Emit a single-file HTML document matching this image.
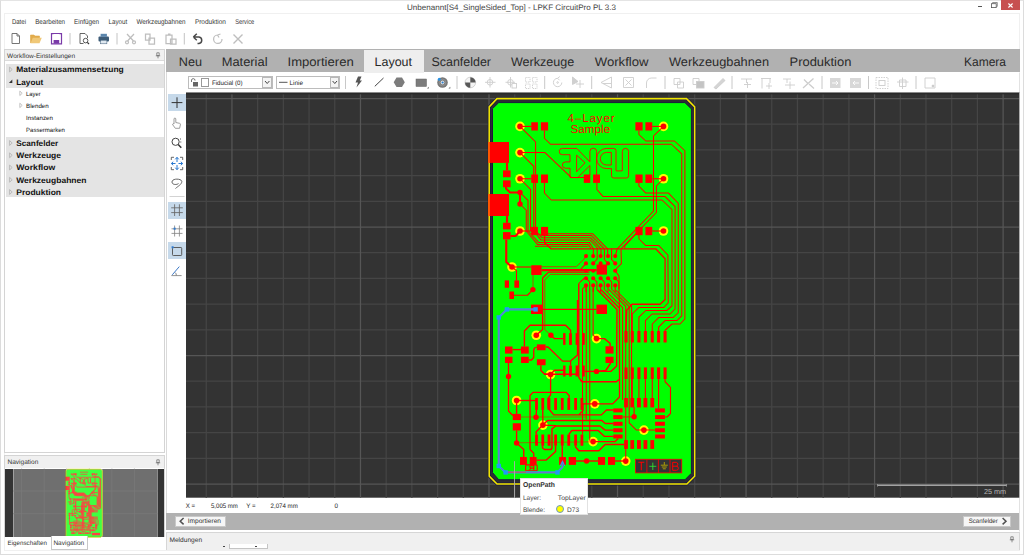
<!DOCTYPE html>
<html><head><meta charset="utf-8">
<style>
*{margin:0;padding:0;box-sizing:border-box}
html,body{width:1024px;height:555px;overflow:hidden;background:#fff;font-family:"Liberation Sans",sans-serif;color:#222;text-rendering:geometricPrecision}
.a{position:absolute}
.t{position:absolute;white-space:nowrap;line-height:1}
#menu .t{font-size:6.9px;top:19.2px;color:#333;transform-origin:0 0}
#tabs .t{font-size:12.75px;top:55.66px;color:#2a2a2a}
.tree-b{font-weight:bold;font-size:8.4px;color:#111;left:16px}
.tree-s{font-size:6.3px;color:#222}
.hdr{background:#f0f0f0}
</style></head><body>
<!-- window frame -->
<div class="a" style="left:0;top:0;width:1024px;height:555px;border:1px solid #dcdcdc;border-top-color:#e4e4e4"></div>
<div class="a" style="left:4px;top:13px;width:1016px;height:538px;border:1px solid #f0f0f0"></div>
<!-- title -->
<!-- window buttons -->
<div class="a" style="left:977.6px;top:6.2px;width:4.4px;height:0.9px;background:#555"></div>
<svg class="a" style="left:988px;top:0" width="12" height="10" viewBox="988 0 12 10" fill="none"><path d="M992.6 3.6 V2.5 H997.3 V6.4 H996.3" stroke="#666" stroke-width="0.7"/><rect x="991.6" y="3.7" width="4.6" height="3.9" stroke="#555" stroke-width="0.8" fill="#fff"/></svg>
<div class="a" style="left:1001px;top:0;width:19px;height:9.8px;background:#c75050"></div>
<svg class="a" style="left:1001px;top:0" width="19" height="10" viewBox="0 0 19 10"><path d="M7.4 3.5 L11.6 7.5 M11.6 3.5 L7.4 7.5" stroke="#fff" stroke-width="1.1"/></svg>
<!-- menu -->
<div id="menu">
</div>
<!-- toolbar1 -->
<svg id="tb1" class="a" style="left:0;top:30px" width="260" height="18" viewBox="0 30 260 18" fill="none">
<path d="M12 33.5 H17 L19.5 36 V43.5 H12 Z M17 33.5 V36 H19.5" stroke="#666" stroke-width="0.9"/>
<path d="M30.5 43 V35 H34 L35 36 H39.5 V38" fill="#e2ac4c" stroke="#e0aa48" stroke-width="0.6"/><path d="M30.5 43.2 L32.8 37.8 H41.8 L39.5 43.2 Z" fill="#f0c878"/>
<path d="M51.5 33.7 H61.5 V43.8 H51.5 Z" stroke="#7a3aa8" stroke-width="1.2"/><rect x="53.6" y="40" width="5.6" height="3.6" fill="#7a3aa8"/><rect x="53.5" y="34" width="6" height="3" fill="#fff"/>
<path d="M70 33 V44.5 M117 33 V44.5 M184.3 33 V44.5" stroke="#c4c4c4" stroke-width="1"/>
<path d="M80 33.5 H85 L87.5 36 V38 M80 33.5 V43.5 H83.5" stroke="#555" stroke-width="0.9"/><circle cx="85.6" cy="40.6" r="2.3" stroke="#444" stroke-width="0.9"/><path d="M87.3 42.3 L89 44" stroke="#333" stroke-width="1.2"/>
<rect x="98.5" y="36.5" width="10.5" height="5" rx="1" fill="#3d5c78"/><rect x="100.6" y="33.8" width="6.3" height="3" fill="#5b86ad"/><rect x="100.6" y="40.2" width="6.3" height="3.6" fill="#dfe8f0" stroke="#3d5c78" stroke-width="0.5"/>
<g stroke="#bebebe" stroke-width="1.25">
<path d="M127 34 L133.5 41 M134 34 L127.5 41"/><circle cx="127" cy="42.3" r="1.5"/><circle cx="134" cy="42.3" r="1.5"/>
<path d="M145.5 34 H150 V40 H145.5 Z M149 38 H154.5 V44 H149 Z"/>
<path d="M166 35 H172 V43.5 H166 Z M170.5 39 H176 V44 H170.5 Z M168 34 H170.5"/>
<path d="M222 39 A4.2 4.2 0 1 1 217.5 35 M217.5 35 L220.5 34 M217.5 35 L219 37.5"/>
<path d="M233.5 34.5 L242.5 43.5 M242.5 34.5 L233.5 43.5" stroke-width="1.4"/>
</g>
<path d="M193.5 37 H199 A3.3 3.3 0 0 1 199 43.5 H197.5 M193.3 37 L196.8 33.8 M193.3 37 L196.8 40.2" stroke="#484848" stroke-width="1.5"/>
</svg>
<!-- left panel -->
<div class="a" style="left:4px;top:49px;width:161px;height:403.7px;border:1px solid #d4d4d4;background:#fff"></div>
<div class="a hdr" style="left:5px;top:50px;width:159px;height:11px;border-bottom:1px solid #dadada"></div>
<div id="tree">
<div class="a" style="left:6px;top:63.5px;width:158px;height:24.5px;background:#e4e4e4"></div>
<div class="a" style="left:6px;top:137.3px;width:158px;height:60px;background:#e4e4e4"></div>
<svg class="a" style="left:0;top:60px" width="30" height="140" viewBox="0 60 30 140" fill="none" stroke="#a0a0a0" stroke-width="0.6">
<path d="M9.6 67.1 L12.2 69.5 L9.6 71.9 Z"/>
<path d="M9.6 140.6 L12.2 143 L9.6 145.4 Z"/>
<path d="M9.6 152.9 L12.2 155.3 L9.6 157.70000000000002 Z"/>
<path d="M9.6 165.1 L12.2 167.5 L9.6 169.9 Z"/>
<path d="M9.6 177.4 L12.2 179.8 L9.6 182.20000000000002 Z"/>
<path d="M9.6 189.6 L12.2 192 L9.6 194.4 Z"/>
<path d="M12.3 79.6 V83 H8.9 Z" fill="#333" stroke="none"/>
<path d="M19.8 91.1 L22.2 93.3 L19.8 95.5 Z"/>
<path d="M19.8 103.2 L22.2 105.4 L19.8 107.60000000000001 Z"/>
</svg>
</div>
<!-- nav panel -->
<div class="a" style="left:4px;top:455px;width:161px;height:82px;border:1px solid #d4d4d4;background:#fff"></div>
<div class="a hdr" style="left:5px;top:456px;width:159px;height:12px"></div>
<div id="nav">
<div class="a" style="left:4.7px;top:468.6px;width:159px;height:68.1px;background:#343434"></div>
<div class="a" style="left:12.8px;top:468.6px;width:145.2px;height:68.1px;background:#6f6f6f;border-left:1.2px solid #a0a0a0;border-right:1px solid #8c8c8c"></div>
<svg class="a" style="left:4px;top:468px" width="161" height="70" viewBox="4 468 161 70">
<path d="M21.6 468.6 V536.7 M44.2 468.6 V536.7 M66.7 468.6 V536.7 M89.3 468.6 V536.7 M111.9 468.6 V536.7 M134.4 468.6 V536.7 M13 491 H157.5 M13 513.7 H157.5" stroke="#7b7b7b" stroke-width="0.7" fill="none"/>
<rect x="66.2" y="469.4" width="36.2" height="67.2" fill="#fff"/>
<g opacity="0.74" transform="translate(-20.31,451.81) scale(0.1765)">
<polygon points="497,98.5 686.4,98.5 694.75,107 694.75,476.2 687,484.1 497,484.1 489,476 489,107" fill="#00ff00" stroke="#d8c800" stroke-width="5"/>
<g fill="none" stroke="#ff0000" stroke-width="4.3" stroke-linejoin="round">
<path d="M520.00 126.40 L531.25 126.40"/>
<path d="M520.00 126.40 L535.60 142.00 L535.60 230.50 L542.00 237.80 L590.70 237.80 L601.00 248.80 L601.00 256.00"/>
<path d="M544.40 130.50 L544.40 138.25 L550.60 144.25 L671.40 144.25 L681.75 153.90 L681.75 315.90 L677.00 320.60 L665.10 320.60 L658.60 327.10 L658.60 331.00"/>
<path d="M520.00 152.60 L545.00 152.60 L571.40 177.60 L584.00 177.60"/>
<path d="M520.00 152.60 L533.75 166.35 L533.75 230.50 L541.00 240.10 L590.00 240.10 L597.20 247.50 L597.20 259.00"/>
<path d="M507.00 163.00 L507.00 170.40"/>
<path d="M506.00 187.00 L506.00 188.50 L510.00 192.50 L520.00 192.50 L520.00 204.00"/>
<path d="M520.00 192.50 L528.00 200.40 L528.00 231.00 L538.50 242.40 L589.20 242.40 L593.40 248.80 L593.20 256.00"/>
<path d="M520.00 204.00 L526.25 210.25 L526.25 231.00 L537.50 244.40 L588.50 244.40 L591.00 248.80"/>
<path d="M520.00 178.75 L531.25 178.75"/>
<path d="M520.00 178.75 L530.60 189.35 L530.60 230.50 L542.50 235.60 L591.50 235.60 L604.40 248.80 L604.40 259.50"/>
<path d="M548.00 233.70 L592.60 233.70 L607.60 248.80 L607.80 256.00"/>
<path d="M535.00 246.20 L588.50 246.20"/>
<path d="M544.40 183.00 L544.40 193.00 L551.25 200.00 L662.00 200.00 L672.00 209.50 L672.00 305.90 L667.00 310.50 L645.75 310.50 L638.90 317.10 L638.90 331.00"/>
<path d="M596.90 183.00 L596.90 189.50 L603.10 196.60 L665.10 196.60 L675.10 206.60 L675.10 309.00 L670.10 314.00 L652.00 314.00 L645.40 320.60 L645.40 331.00"/>
<path d="M638.90 183.00 L638.90 186.00 L645.75 193.10 L668.50 193.10 L678.25 203.25 L678.25 312.75 L673.25 317.40 L658.90 317.40 L652.25 324.00 L652.25 331.00"/>
<path d="M638.90 130.50 L638.90 134.50 L645.75 141.00 L674.50 141.00 L684.90 150.75 L684.90 319.00 L680.10 324.00 L672.00 324.00 L665.10 330.25 L665.10 331.00"/>
<path d="M663.50 126.40 L653.50 136.00 L653.50 211.00 L617.20 248.80 L615.30 256.00"/>
<path d="M663.50 178.75 L656.40 186.00 L656.40 212.50 L621.00 248.80 L621.40 263.60 L617.00 268.00 L615.20 270.80"/>
<path d="M638.90 231.00 L624.80 246.00 L624.80 248.80"/>
<path d="M652.25 126.40 L663.50 126.40"/>
<path d="M652.25 178.75 L663.50 178.75"/>
<path d="M652.25 231.00 L663.50 231.00"/>
<path d="M638.90 235.00 L638.90 238.75 L645.75 245.60 L658.90 245.60 L667.90 255.00 L668.25 302.75 L663.90 307.40 L638.90 307.40 L632.25 314.00 L632.25 331.00"/>
<path d="M544.60 236.00 L544.60 242.70 L551.00 248.80 L655.75 248.80 L665.10 258.75 L665.10 299.60 L660.10 304.25 L632.00 304.25 L626.75 310.25 L626.00 331.00"/>
<path d="M507.00 216.00 L507.00 222.75"/>
<path d="M510.60 236.00 L515.60 236.00 L520.00 231.00"/>
<path d="M520.00 231.00 L531.00 231.00"/>
<path d="M506.25 239.40 L506.25 262.00 L512.00 267.00"/>
<path d="M512.00 267.00 L531.25 267.00"/>
<path d="M512.00 267.00 L516.50 270.60 L516.50 280.40"/>
<path d="M533.00 275.00 L533.00 289.60"/>
<path d="M514.00 295.25 L527.50 295.25 L532.90 289.60"/>
<path d="M541.60 266.70 L576.25 266.70 L583.75 259.40 L586.00 256.10"/>
<path d="M541.60 270.10 L596.60 270.10"/>
<path d="M580.00 270.10 L586.00 263.40"/>
<path d="M589.40 272.10 L548.50 272.10 L542.60 278.00 L542.60 329.60 L536.25 335.25"/>
<path d="M589.40 274.40 L550.40 274.40 L544.80 280.00 L544.80 329.60 L550.90 335.25"/>
<path d="M542.50 309.40 L596.40 309.40"/>
<path d="M550.90 335.25 L554.40 338.60 L563.10 338.60"/>
<path d="M524.40 346.50 L524.40 330.90 L530.00 325.25 L565.60 325.25 L570.60 330.25 L570.60 333.10"/>
<path d="M596.50 338.60 L604.40 338.60 L610.10 343.40 L610.10 346.25"/>
<path d="M512.50 349.60 L521.00 349.60"/>
<path d="M536.90 347.00 L534.50 348.00 L533.75 350.00 L533.75 357.50 L531.50 360.00 L528.75 360.00"/>
<path d="M545.60 347.00 L548.00 347.00 L562.50 361.10 L570.60 361.10 L577.50 354.90 L577.50 300.00"/>
<path d="M570.60 361.10 L570.60 365.50"/>
<path d="M508.50 363.00 L508.50 411.00 L512.75 415.50"/>
<path d="M540.90 365.25 L540.90 370.50 L544.40 374.00 L550.60 374.50"/>
<path d="M550.60 374.50 L554.50 370.20 L563.10 370.20"/>
<path d="M544.00 374.30 L578.00 374.30"/>
<path d="M584.75 371.40 L596.50 371.40"/>
<path d="M578.75 283.50 L578.75 377.40 L581.90 381.75 L616.40 381.75 L618.90 379.50"/>
<path d="M596.50 371.40 L610.75 371.40 L616.60 366.00 L617.00 309.50 L597.00 289.50"/>
<path d="M610.75 363.00 L605.75 370.50 L596.50 371.40"/>
<path d="M550.60 374.50 L550.60 395.00 L548.00 398.50"/>
<path d="M536.50 409.90 L536.00 417.25"/>
<path d="M542.75 409.90 L542.90 425.10"/>
<path d="M542.90 425.10 L556.00 425.70"/>
<path d="M530.00 449.50 L530.00 395.50 L533.00 392.40 L566.25 392.40 L569.40 396.00 L568.75 398.00"/>
<path d="M516.60 400.50 L536.50 400.50"/>
<path d="M516.60 400.50 L516.60 413.90"/>
<path d="M548.00 398.00 L548.00 408.00 L553.75 414.90 L601.40 414.90 L606.40 410.00 L613.25 410.00"/>
<path d="M578.75 414.90 L583.00 410.50 L583.00 404.00"/>
<path d="M581.90 403.90 L612.60 403.90 L619.50 397.00 L619.50 308.25 L600.75 289.50"/>
<path d="M542.90 425.10 L536.00 432.00 L536.50 434.50"/>
<path d="M542.90 425.10 L547.50 420.50 L601.90 420.50 L605.10 423.50 L613.25 423.50"/>
<path d="M542.50 445.75 L542.50 448.00 L544.50 449.50 L551.00 449.50 L552.00 448.00 L552.00 428.90 L555.60 426.00 L600.00 426.00 L605.10 430.10 L613.25 430.10"/>
<path d="M568.75 434.50 L571.90 430.50 L598.10 430.50 L604.50 436.40 L613.25 436.40"/>
<path d="M516.60 442.80 L593.10 441.80"/>
<path d="M593.10 441.60 L615.10 441.60 L618.25 438.50"/>
<path d="M555.60 445.75 L555.60 451.40 L546.25 460.10 L536.60 460.10"/>
<path d="M562.25 445.75 L562.25 457.00"/>
<path d="M575.60 445.75 L575.60 447.00 L578.75 450.75 L598.90 450.75 L605.10 444.50 L624.00 444.50"/>
<path d="M576.00 461.00 L598.00 461.00"/>
<path d="M615.10 461.00 L625.75 461.00"/>
<path d="M516.60 430.50 L516.60 443.00 L523.75 449.50 L523.75 457.00"/>
<path d="M530.00 449.50 L533.75 453.25 L533.75 457.00"/>
<path d="M520.90 417.00 L586.00 417.00"/>
<path d="M622.60 417.00 L634.10 416.75 L634.10 407.00"/>
<path d="M655.00 430.10 L636.40 430.10 L629.20 422.90 L629.20 306.70 L612.00 289.50"/>
<path d="M665.00 417.00 L667.00 417.00 L670.50 413.50 L670.50 387.40 L665.10 381.75 L665.10 379.00"/>
<path d="M632.25 379.00 L632.25 398.00"/>
<path d="M638.90 379.00 L638.90 398.00"/>
<path d="M645.40 379.00 L645.40 398.00"/>
<path d="M652.25 379.00 L652.25 398.00"/>
<path d="M658.60 379.00 L658.60 408.40"/>
<path d="M625.75 461.10 L625.75 306.35 L608.90 289.50"/>
<path d="M622.60 400.00 L622.60 307.60 L604.50 289.50"/>
<path d="M631.60 400.00 L631.60 306.00 L615.10 289.50"/>
<path d="M582.50 289.00 L582.50 434.50"/>
<path d="M586.25 285.00 L586.25 419.50"/>
<path d="M589.75 289.00 L589.75 440.75"/>
<path d="M593.10 288.00 L593.10 335.00 L596.50 338.60"/>
<path d="M586.00 285.40 L586.00 292.00"/>
<path d="M593.20 285.40 L593.20 292.00"/>
<path d="M600.60 285.40 L600.60 292.00"/>
<path d="M608.00 285.40 L608.00 292.00"/>
<path d="M615.20 285.40 L615.20 292.00"/>
<path d="M586.00 278.20 L589.70 282.00 L589.70 289.50"/>
<path d="M593.20 278.20 L596.90 282.00 L596.90 289.50"/>
<path d="M600.60 278.20 L604.30 282.00 L604.30 289.50"/>
<path d="M608.00 278.20 L611.70 282.00 L611.70 289.50"/>
<path d="M615.20 278.20 L618.90 282.00 L618.90 289.50"/>
<path d="M618.90 289.50 L619.50 308.00"/>
<path d="M597.20 259.00 L594.50 262.00"/>
<path d="M604.40 259.50 L606.80 262.20"/>
<path d="M611.60 248.80 L611.60 259.50 L614.00 262.20"/>
<path d="M586.00 278.20 L584.30 278.20 L578.75 283.50"/>
<path d="M586.00 285.40 L582.50 289.00"/>
<path d="M615.20 270.80 L619.00 276.00 L619.00 289.50"/>
</g>
<g fill="#ff0000">
<rect x="487.00" y="141.00" width="23.00" height="22.90"/>
<rect x="487.00" y="193.00" width="23.00" height="24.00"/>
<rect x="530.25" y="121.25" width="8.65" height="10.25"/>
<rect x="539.90" y="121.25" width="9.20" height="10.25"/>
<rect x="634.40" y="121.25" width="9.20" height="10.25"/>
<rect x="644.40" y="121.25" width="8.85" height="10.25"/>
<rect x="530.25" y="173.50" width="8.75" height="10.40"/>
<rect x="540.00" y="173.50" width="9.00" height="10.40"/>
<rect x="582.75" y="173.50" width="8.50" height="10.40"/>
<rect x="592.10" y="173.50" width="8.90" height="10.40"/>
<rect x="634.40" y="173.50" width="9.20" height="10.40"/>
<rect x="644.40" y="173.50" width="8.85" height="10.40"/>
<rect x="530.10" y="225.90" width="8.80" height="10.30"/>
<rect x="540.00" y="225.90" width="9.10" height="10.30"/>
<rect x="634.40" y="225.90" width="9.20" height="10.30"/>
<rect x="644.40" y="225.90" width="8.85" height="10.30"/>
<rect x="502.00" y="169.40" width="9.60" height="8.85"/>
<rect x="502.00" y="179.40" width="9.60" height="8.85"/>
<rect x="502.00" y="221.75" width="9.60" height="8.65"/>
<rect x="502.00" y="231.10" width="9.60" height="9.30"/>
<rect x="530.25" y="264.25" width="12.35" height="11.75"/>
<rect x="503.75" y="279.40" width="6.25" height="9.35"/>
<rect x="513.40" y="279.40" width="6.70" height="9.35"/>
<rect x="508.40" y="290.50" width="6.60" height="9.50"/>
<rect x="530.00" y="303.60" width="13.50" height="11.40"/>
<rect x="595.40" y="303.60" width="12.60" height="11.40"/>
<rect x="504.00" y="345.50" width="9.50" height="9.10"/>
<rect x="504.00" y="355.75" width="9.50" height="8.25"/>
<rect x="520.00" y="345.50" width="9.75" height="9.10"/>
<rect x="520.00" y="355.75" width="9.75" height="8.25"/>
<rect x="535.90" y="343.40" width="10.70" height="7.85"/>
<rect x="535.90" y="358.25" width="10.70" height="8.00"/>
<rect x="604.50" y="345.25" width="10.00" height="9.35"/>
<rect x="604.50" y="355.75" width="10.00" height="8.25"/>
<rect x="562.10" y="332.10" width="4.40" height="13.80"/>
<rect x="562.10" y="364.50" width="4.40" height="13.00"/>
<rect x="568.10" y="332.10" width="4.80" height="13.80"/>
<rect x="568.10" y="364.50" width="4.80" height="13.00"/>
<rect x="574.60" y="332.10" width="4.80" height="13.80"/>
<rect x="574.60" y="364.50" width="4.80" height="13.00"/>
<rect x="581.25" y="332.10" width="4.50" height="13.80"/>
<rect x="581.25" y="364.50" width="4.50" height="13.00"/>
<rect x="623.45" y="330.00" width="5.10" height="13.50"/>
<rect x="623.45" y="366.40" width="5.10" height="13.60"/>
<rect x="629.70" y="330.00" width="5.10" height="13.50"/>
<rect x="629.70" y="366.40" width="5.10" height="13.60"/>
<rect x="636.35" y="330.00" width="5.10" height="13.50"/>
<rect x="636.35" y="366.40" width="5.10" height="13.60"/>
<rect x="642.85" y="330.00" width="5.10" height="13.50"/>
<rect x="642.85" y="366.40" width="5.10" height="13.60"/>
<rect x="649.70" y="330.00" width="5.10" height="13.50"/>
<rect x="649.70" y="366.40" width="5.10" height="13.60"/>
<rect x="656.05" y="330.00" width="5.10" height="13.50"/>
<rect x="656.05" y="366.40" width="5.10" height="13.60"/>
<rect x="662.55" y="330.00" width="5.10" height="13.50"/>
<rect x="662.55" y="366.40" width="5.10" height="13.60"/>
<rect x="534.10" y="397.00" width="4.80" height="13.90"/>
<rect x="534.10" y="433.50" width="4.80" height="13.25"/>
<rect x="540.35" y="397.00" width="4.80" height="13.90"/>
<rect x="540.35" y="433.50" width="4.80" height="13.25"/>
<rect x="546.60" y="397.00" width="4.80" height="13.90"/>
<rect x="546.60" y="433.50" width="4.80" height="13.25"/>
<rect x="553.20" y="397.00" width="4.80" height="13.90"/>
<rect x="553.20" y="433.50" width="4.80" height="13.25"/>
<rect x="559.85" y="397.00" width="4.80" height="13.90"/>
<rect x="559.85" y="433.50" width="4.80" height="13.25"/>
<rect x="566.35" y="397.00" width="4.80" height="13.90"/>
<rect x="566.35" y="433.50" width="4.80" height="13.25"/>
<rect x="573.20" y="397.00" width="4.80" height="13.90"/>
<rect x="573.20" y="433.50" width="4.80" height="13.25"/>
<rect x="579.50" y="397.00" width="4.80" height="13.90"/>
<rect x="579.50" y="433.50" width="4.80" height="13.25"/>
<rect x="623.10" y="397.00" width="5.80" height="11.40"/>
<rect x="623.10" y="439.10" width="5.80" height="10.80"/>
<rect x="629.35" y="397.00" width="5.80" height="11.40"/>
<rect x="629.35" y="439.10" width="5.80" height="10.80"/>
<rect x="636.00" y="397.00" width="5.80" height="11.40"/>
<rect x="636.00" y="439.10" width="5.80" height="10.80"/>
<rect x="642.50" y="397.00" width="5.80" height="11.40"/>
<rect x="642.50" y="439.10" width="5.80" height="10.80"/>
<rect x="649.35" y="397.00" width="5.80" height="11.40"/>
<rect x="649.35" y="439.10" width="5.80" height="10.80"/>
<rect x="612.25" y="407.40" width="11.35" height="6.00"/>
<rect x="654.10" y="407.40" width="11.80" height="6.00"/>
<rect x="612.25" y="414.10" width="11.35" height="6.00"/>
<rect x="654.10" y="414.10" width="11.80" height="6.00"/>
<rect x="612.25" y="420.75" width="11.35" height="6.00"/>
<rect x="654.10" y="420.75" width="11.80" height="6.00"/>
<rect x="612.25" y="427.25" width="11.35" height="6.00"/>
<rect x="654.10" y="427.25" width="11.80" height="6.00"/>
<rect x="612.25" y="433.50" width="11.35" height="6.00"/>
<rect x="654.10" y="433.50" width="11.80" height="6.00"/>
<rect x="511.75" y="412.90" width="10.15" height="8.20"/>
<rect x="511.75" y="422.25" width="10.15" height="9.25"/>
<rect x="519.00" y="456.00" width="8.90" height="9.90"/>
<rect x="528.75" y="456.00" width="8.85" height="9.90"/>
<rect x="558.10" y="456.00" width="8.90" height="9.90"/>
<rect x="567.75" y="456.00" width="9.25" height="9.90"/>
<rect x="597.00" y="456.00" width="9.10" height="9.90"/>
<rect x="607.00" y="456.00" width="9.10" height="9.90"/>
<rect x="595.60" y="263.50" width="12.40" height="12.10"/>
<circle cx="520" cy="126.4" r="4"/><circle cx="520" cy="152.6" r="4"/><circle cx="520" cy="178.75" r="4"/><circle cx="520" cy="231" r="4"/><circle cx="512" cy="267" r="4"/><circle cx="536.25" cy="335.25" r="4"/><circle cx="596.5" cy="338.6" r="4"/><circle cx="550.6" cy="374.5" r="4"/><circle cx="516.6" cy="400.5" r="4"/><circle cx="594.75" cy="403.9" r="4"/><circle cx="542.9" cy="425.1" r="4"/><circle cx="593.1" cy="441.6" r="4"/><circle cx="643.9" cy="430.1" r="4"/><circle cx="625.75" cy="461.1" r="4"/><circle cx="663.5" cy="126.4" r="4"/><circle cx="663.5" cy="178.75" r="4"/><circle cx="663.5" cy="231" r="4"/><circle cx="520" cy="192.5" r="4"/><circle cx="520" cy="204" r="4"/><circle cx="532.9" cy="289.6" r="4"/><circle cx="550.9" cy="335.25" r="4"/><circle cx="508.5" cy="376.5" r="4"/><circle cx="596.5" cy="371.4" r="4"/><circle cx="536" cy="417.25" r="4"/><circle cx="516.6" cy="443" r="4"/><circle cx="586.6" cy="461" r="4"/><circle cx="634.1" cy="416.75" r="4"/>
<circle cx="586" cy="256.1" r="2.6"/><circle cx="586" cy="263.4" r="2.6"/><circle cx="586" cy="270.8" r="2.6"/><circle cx="586" cy="278.2" r="2.6"/><circle cx="586" cy="285.4" r="2.6"/><circle cx="593.2" cy="256.1" r="2.6"/><circle cx="593.2" cy="263.4" r="2.6"/><circle cx="593.2" cy="270.8" r="2.6"/><circle cx="593.2" cy="278.2" r="2.6"/><circle cx="593.2" cy="285.4" r="2.6"/><circle cx="600.6" cy="256.1" r="2.6"/><circle cx="600.6" cy="263.4" r="2.6"/><circle cx="600.6" cy="278.2" r="2.6"/><circle cx="600.6" cy="285.4" r="2.6"/><circle cx="608" cy="256.1" r="2.6"/><circle cx="608" cy="263.4" r="2.6"/><circle cx="608" cy="278.2" r="2.6"/><circle cx="608" cy="285.4" r="2.6"/><circle cx="615.2" cy="256.1" r="2.6"/><circle cx="615.2" cy="263.4" r="2.6"/><circle cx="615.2" cy="270.8" r="2.6"/><circle cx="615.2" cy="278.2" r="2.6"/><circle cx="615.2" cy="285.4" r="2.6"/>
<rect x="635.4" y="459.25" width="46.35" height="13.65"/>
<rect x="568" y="113" width="46" height="4"/><rect x="571" y="125" width="39" height="4"/>
<path d="M562 151 H577 L590 165 L578 177 M593 150 V176 M597 158 Q598 149 614 149 V177 H628 V150 M570 151 V177" stroke="#ff0000" stroke-width="5" fill="none"/>
</g>
</g>
</svg>
<div class="a" style="left:50.6px;top:536.2px;width:37px;height:13.5px;background:#fff;border:1px solid #c8c8c8;border-top:none"></div>
</div>
<!-- tab bar -->
<div class="a" style="left:166px;top:48.7px;width:853.8px;height:23.8px;background:#b1b1b1"></div>
<div class="a" style="left:1019.3px;top:72.5px;width:1.2px;height:458px;background:#e2e2e2"></div>
<div class="a" style="left:364px;top:49.6px;width:59.5px;height:23.2px;background:#eeeeee"></div>
<div id="tabs">
</div>
<div class="a" style="left:166px;top:72px;width:1px;height:441px;background:#dadada"></div>
<!-- toolbar 2 -->
<div id="tb2">
<div class="a" style="left:188px;top:76px;width:85px;height:13px;border:1px solid #bcbcbc;background:#fff"></div>
<div class="a" style="left:262px;top:77px;width:10px;height:11px;border:1px solid #b8b8b8;background:#f4f4f4"></div>
<div class="a" style="left:201px;top:78px;width:8px;height:9px;border:1px solid #999;background:#fff"></div>
<div class="a" style="left:276px;top:76px;width:64px;height:13px;border:1px solid #bcbcbc;background:#fff"></div>
<div class="a" style="left:330px;top:77px;width:9px;height:11px;border:1px solid #b8b8b8;background:#f4f4f4"></div>
<svg class="a" style="left:186px;top:73px" width="832" height="19" viewBox="186 73 832 19" fill="none">
<path d="M191.5 82 V80 A1.8 1.8 0 0 1 195 80 V80.6" stroke="#666" stroke-width="0.9"/><rect x="193" y="82" width="5" height="4.5" fill="#666"/>
<path d="M265 81 L267.2 83.5 L269.4 81 M332.6 81 L334.8 83.5 L337 81" stroke="#333" stroke-width="0.9"/>
<path d="M279 82.3 H287.5" stroke="#555" stroke-width="1"/>
<path d="M345.5 76 V89 M457 76 V89 M544.7 76 V89 M591.7 76 V89 M665 76 V89 M732 76 V89 M822 76 V89 M868.5 76 V89 M916 76 V89" stroke="#c8c8c8" stroke-width="1"/>
<path d="M358 76.5 H361.5 L359.8 80.5 H362 L356.5 87.5 L358 82.5 H355.5 Z" fill="#555"/>
<path d="M374.8 86.3 L383.5 78" stroke="#444" stroke-width="1"/>
<path d="M396.5 77.5 H402 L404.8 82.3 L402 87 H396.5 L393.7 82.3 Z" fill="#7c7c7c"/>
<rect x="416" y="79" width="10.5" height="7.5" fill="#7c7c7c" stroke="#666" stroke-width="0.5"/><path d="M427 88.5 L428.8 88.5 L428.8 86.7 Z" fill="#666"/>
<circle cx="442.5" cy="82.5" r="5.3" fill="#787878"/><circle cx="442.5" cy="82.5" r="3.3" fill="none" stroke="#9a9a9a" stroke-width="0.7"/><circle cx="442.5" cy="82.5" r="1.9" fill="#e4e4e4"/><circle cx="442.6" cy="82.5" r="1.1" fill="#2a7fd0"/><circle cx="439.3" cy="79.3" r="1.5" fill="#2a90e0"/><path d="M448.5 88.5 L450.3 88.5 L450.3 86.7 Z" fill="#666"/>
<circle cx="470.3" cy="82.5" r="5.3" fill="#f4f4f4" stroke="#bbb" stroke-width="0.6"/><path d="M470.3 82.5 V77.2 A5.3 5.3 0 0 1 475.6 82.5 Z M470.3 82.5 V87.8 A5.3 5.3 0 0 1 465 82.5 Z" fill="#585858"/>
<g stroke="#cdcdcd" stroke-width="0.9">
<path d="M490 77 V87.5 M485 82.3 H495.5"/><circle cx="490" cy="82.3" r="2.8"/>
<path d="M510.5 77 V87.5 M505.5 82.3 H515"/><circle cx="510.5" cy="82.3" r="2.8"/><rect x="512" y="83.5" width="4.5" height="4.5" fill="#fff"/>
<path d="M525.5 77.5 H530 V82 H525.5 Z M532.5 77.5 H537 V82 H532.5 Z M525.5 84 H530 V88.5 H525.5 Z M532.5 84 H537 V88.5 H532.5 Z" stroke-dasharray="1.2 0.8"/>
<path d="M561.8 82.5 A4.2 4.2 0 1 1 557.6 78.3 M557.6 78.3 L559.8 76.5 M557.6 78.3 L559.6 80.3"/><circle cx="557.6" cy="82.5" r="0.8"/>
<path d="M572.5 77 L572.5 84.5 L578 81.5 Z" fill="#d0d0d0"/><path d="M580 80 V88 M576 84 H584"/>
<path d="M611.5 77 V88 L601 82.5 Z M603 83.5 H611"/>
<path d="M623.5 77.5 H633.5 V87.5 H623.5 Z M625.5 79.5 L631.5 85.5 M631.5 79.5 L625.5 85.5"/>
<path d="M646.5 88 V83 A5 5 0 0 1 651.5 78 H656.5"/>
<path d="M674 78.5 H680 V84.5 H674 Z M677.5 82 H683.5 V88 H677.5 Z"/>
<path d="M693 78.5 H699 V84.5 H693 Z"/><rect x="696.5" y="81.5" width="7.5" height="6.5" fill="#c4c4c4"/>
<path d="M714 87.5 L723 78.5 L725 80.5 L716 89 Z" fill="#d4d4d4"/>
<path d="M741 79 H752 M746.5 79 V83 M744 84.5 H751 M747.5 82 V88"/>
<path d="M761 78.5 H771 M762 78.5 V88.5 M770 78.5 V83 M766 86 H772 M769 83 V89"/>
<path d="M783 79 H791 M787 79 V83 M785 85 H795 M790 81.5 V89"/>
<path d="M803 88 L813.5 78.5 M804 79.5 L808 83.5 M809 84 L814 88.5" stroke-width="1.3"/>
<rect x="830" y="78" width="10.5" height="10" fill="#d8d8d8" stroke="none"/><path d="M832 83 H838 M836 81 L838 83 L836 85" stroke="#fff"/>
<rect x="850" y="78" width="11" height="10" fill="#d8d8d8" stroke="none"/><path d="M853 83 H859 M855 81 L853 83 L855 85" stroke="#fff"/>
<path d="M876 77.5 H888 V88.5 H876 Z" stroke-dasharray="1.5 1"/><rect x="879" y="80.5" width="6" height="5"/>
<path d="M899.5 80 H906 V86.5 H899.5 Z M897 82 H908.5 M902.5 77.5 V89"/>
<path d="M925 78 H935 V88 H925 Z"/><circle cx="933" cy="86" r="1" fill="#bbb"/>
</g>
</svg>
</div>
<!-- canvas -->
<svg class="a" id="canvas" style="left:186px;top:92px" width="834" height="406" viewBox="186 92 834 406">
<rect x="186" y="92" width="833.3" height="405.7" fill="#333"/>
<path d="M206.25 92 V498 M257.66 92 V498 M283.36 92 V498 M309.07 92 V498 M334.77 92 V498 M386.18 92 V498 M411.89 92 V498 M437.59 92 V498 M463.30 92 V498 M514.71 92 V498 M540.41 92 V498 M566.12 92 V498 M591.82 92 V498 M643.24 92 V498 M668.94 92 V498 M694.65 92 V498 M720.35 92 V498 M771.76 92 V498 M797.47 92 V498 M823.17 92 V498 M848.88 92 V498 M900.29 92 V498 M925.99 92 V498 M951.70 92 V498 M977.40 92 V498 M186 124.20 H1019 M186 149.90 H1019 M186 175.60 H1019 M186 201.30 H1019 M186 252.70 H1019 M186 278.40 H1019 M186 304.10 H1019 M186 329.80 H1019 M186 381.20 H1019 M186 406.90 H1019 M186 432.60 H1019 M186 458.30 H1019" stroke="#454545" stroke-width="1.25" fill="none"/>
<path d="M231.95 92 V498 M360.48 92 V498 M489.00 92 V498 M617.53 92 V498 M746.06 92 V498 M874.58 92 V498 M1003.11 92 V498 M186 98.50 H1019 M186 227.00 H1019 M186 355.50 H1019 M186 484.00 H1019" stroke="#565656" stroke-width="1.25" fill="none"/>
<rect x="186" y="92" width="833" height="1" fill="#8a8a8a"/><rect x="186" y="93" width="833" height="1.3" fill="#2a2a2a"/>
<path d="M877.5 485.3 H1006.5" stroke="#a2a2a2" stroke-width="1.4"/><path d="M877.5 484 V486.6 M1006.5 484 V486.6" stroke="#9c9c9c" stroke-width="0.8"/>
<text x="983.9" y="494.2" font-family="Liberation Sans, sans-serif" font-size="7.3" fill="#b4b4b4">25 mm</text>
<g id="pcb">
<polygon points="497,98.6 686.5,98.6 694.7,106.9 694.7,476.2 686.9,484 497,484 489.2,476.1 489.2,106.9" fill="#2c2c34" stroke="#1a1a3c" stroke-width="2.9" stroke-linejoin="miter"/>
<polygon points="497,98.6 686.5,98.6 694.7,106.9 694.7,476.2 686.9,484 497,484 489.2,476.1 489.2,106.9" fill="none" stroke="#f2e600" stroke-width="1.55"/>
<polygon points="498.75,102.6 684.9,102.6 691.4,108.9 691.4,473.25 685,479.75 498.75,479.75 492.5,472.6 492.5,108.6" fill="#00ff00" stroke="#1a1a3c" stroke-width="1"/>
<g fill="#ffff00"><circle cx="520" cy="126.4" r="4.8"/><circle cx="520" cy="152.6" r="4.8"/><circle cx="520" cy="178.75" r="4.8"/><circle cx="520" cy="231" r="4.8"/><circle cx="512" cy="267" r="4.8"/><circle cx="536.25" cy="335.25" r="4.8"/><circle cx="596.5" cy="338.6" r="4.8"/><circle cx="550.6" cy="374.5" r="4.8"/><circle cx="516.6" cy="400.5" r="4.8"/><circle cx="594.75" cy="403.9" r="4.8"/><circle cx="542.9" cy="425.1" r="4.8"/><circle cx="593.1" cy="441.6" r="4.8"/><circle cx="643.9" cy="430.1" r="4.8"/><circle cx="625.75" cy="461.1" r="4.8"/><circle cx="663.5" cy="126.4" r="4.8"/><circle cx="663.5" cy="178.75" r="4.8"/><circle cx="663.5" cy="231" r="4.8"/></g>
<g fill="none" stroke="#ff0000" stroke-width="1.02" stroke-linejoin="round">
<path d="M520.00 126.40 L531.25 126.40" stroke-width="1.12"/>
<path d="M520.00 126.40 L535.60 142.00 L535.60 230.50 L542.00 237.80 L590.70 237.80 L601.00 248.80 L601.00 256.00"/>
<path d="M544.40 130.50 L544.40 138.25 L550.60 144.25 L671.40 144.25 L681.75 153.90 L681.75 315.90 L677.00 320.60 L665.10 320.60 L658.60 327.10 L658.60 331.00"/>
<path d="M520.00 152.60 L545.00 152.60 L571.40 177.60 L584.00 177.60"/>
<path d="M520.00 152.60 L533.75 166.35 L533.75 230.50 L541.00 240.10 L590.00 240.10 L597.20 247.50 L597.20 259.00"/>
<path d="M507.00 163.00 L507.00 170.40" stroke-width="2.2"/>
<path d="M506.00 187.00 L506.00 188.50 L510.00 192.50 L520.00 192.50 L520.00 204.00" stroke-width="2.0"/>
<path d="M520.00 192.50 L528.00 200.40 L528.00 231.00 L538.50 242.40 L589.20 242.40 L593.40 248.80 L593.20 256.00"/>
<path d="M520.00 204.00 L526.25 210.25 L526.25 231.00 L537.50 244.40 L588.50 244.40 L591.00 248.80"/>
<path d="M520.00 178.75 L531.25 178.75" stroke-width="1.12"/>
<path d="M520.00 178.75 L530.60 189.35 L530.60 230.50 L542.50 235.60 L591.50 235.60 L604.40 248.80 L604.40 259.50"/>
<path d="M548.00 233.70 L592.60 233.70 L607.60 248.80 L607.80 256.00"/>
<path d="M535.00 246.20 L588.50 246.20"/>
<path d="M544.40 183.00 L544.40 193.00 L551.25 200.00 L662.00 200.00 L672.00 209.50 L672.00 305.90 L667.00 310.50 L645.75 310.50 L638.90 317.10 L638.90 331.00"/>
<path d="M596.90 183.00 L596.90 189.50 L603.10 196.60 L665.10 196.60 L675.10 206.60 L675.10 309.00 L670.10 314.00 L652.00 314.00 L645.40 320.60 L645.40 331.00"/>
<path d="M638.90 183.00 L638.90 186.00 L645.75 193.10 L668.50 193.10 L678.25 203.25 L678.25 312.75 L673.25 317.40 L658.90 317.40 L652.25 324.00 L652.25 331.00"/>
<path d="M638.90 130.50 L638.90 134.50 L645.75 141.00 L674.50 141.00 L684.90 150.75 L684.90 319.00 L680.10 324.00 L672.00 324.00 L665.10 330.25 L665.10 331.00"/>
<path d="M663.50 126.40 L653.50 136.00 L653.50 211.00 L617.20 248.80 L615.30 256.00"/>
<path d="M663.50 178.75 L656.40 186.00 L656.40 212.50 L621.00 248.80 L621.40 263.60 L617.00 268.00 L615.20 270.80"/>
<path d="M638.90 231.00 L624.80 246.00 L624.80 248.80"/>
<path d="M652.25 126.40 L663.50 126.40" stroke-width="1.12"/>
<path d="M652.25 178.75 L663.50 178.75" stroke-width="1.12"/>
<path d="M652.25 231.00 L663.50 231.00" stroke-width="1.12"/>
<path d="M638.90 235.00 L638.90 238.75 L645.75 245.60 L658.90 245.60 L667.90 255.00 L668.25 302.75 L663.90 307.40 L638.90 307.40 L632.25 314.00 L632.25 331.00"/>
<path d="M544.60 236.00 L544.60 242.70 L551.00 248.80 L655.75 248.80 L665.10 258.75 L665.10 299.60 L660.10 304.25 L632.00 304.25 L626.75 310.25 L626.00 331.00" stroke-width="1.3"/>
<path d="M507.00 216.00 L507.00 222.75" stroke-width="2.2"/>
<path d="M510.60 236.00 L515.60 236.00 L520.00 231.00" stroke-width="2.0"/>
<path d="M520.00 231.00 L531.00 231.00" stroke-width="1.2"/>
<path d="M506.25 239.40 L506.25 262.00 L512.00 267.00" stroke-width="2.1"/>
<path d="M512.00 267.00 L531.25 267.00" stroke-width="1.12"/>
<path d="M512.00 267.00 L516.50 270.60 L516.50 280.40" stroke-width="1.12"/>
<path d="M533.00 275.00 L533.00 289.60" stroke-width="0.65"/>
<path d="M514.00 295.25 L527.50 295.25 L532.90 289.60" stroke-width="1.12"/>
<path d="M541.60 266.70 L576.25 266.70 L583.75 259.40 L586.00 256.10" stroke-width="0.7"/>
<path d="M541.60 270.10 L596.60 270.10" stroke-width="2.3"/>
<path d="M580.00 270.10 L586.00 263.40"/>
<path d="M589.40 272.10 L548.50 272.10 L542.60 278.00 L542.60 329.60 L536.25 335.25" stroke-width="1.3"/>
<path d="M589.40 274.40 L550.40 274.40 L544.80 280.00 L544.80 329.60 L550.90 335.25" stroke-width="0.7"/>
<path d="M542.50 309.40 L596.40 309.40" stroke-width="1.3"/>
<path d="M550.90 335.25 L554.40 338.60 L563.10 338.60" stroke-width="1.4"/>
<path d="M524.40 346.50 L524.40 330.90 L530.00 325.25 L565.60 325.25 L570.60 330.25 L570.60 333.10" stroke-width="1.4"/>
<path d="M596.50 338.60 L604.40 338.60 L610.10 343.40 L610.10 346.25" stroke-width="1.4"/>
<path d="M512.50 349.60 L521.00 349.60" stroke-width="1.4"/>
<path d="M536.90 347.00 L534.50 348.00 L533.75 350.00 L533.75 357.50 L531.50 360.00 L528.75 360.00" stroke-width="1.3"/>
<path d="M545.60 347.00 L548.00 347.00 L562.50 361.10 L570.60 361.10 L577.50 354.90 L577.50 300.00" stroke-width="1.3"/>
<path d="M570.60 361.10 L570.60 365.50" stroke-width="1.3"/>
<path d="M508.50 363.00 L508.50 411.00 L512.75 415.50" stroke-width="1.3"/>
<path d="M540.90 365.25 L540.90 370.50 L544.40 374.00 L550.60 374.50" stroke-width="1.4"/>
<path d="M550.60 374.50 L554.50 370.20 L563.10 370.20" stroke-width="1.4"/>
<path d="M544.00 374.30 L578.00 374.30" stroke-width="1.4"/>
<path d="M584.75 371.40 L596.50 371.40" stroke-width="1.4"/>
<path d="M578.75 283.50 L578.75 377.40 L581.90 381.75 L616.40 381.75 L618.90 379.50" stroke-width="1.4"/>
<path d="M596.50 371.40 L610.75 371.40 L616.60 366.00 L617.00 309.50 L597.00 289.50" stroke-width="1.4"/>
<path d="M610.75 363.00 L605.75 370.50 L596.50 371.40" stroke-width="1.4"/>
<path d="M550.60 374.50 L550.60 395.00 L548.00 398.50" stroke-width="1.3"/>
<path d="M536.50 409.90 L536.00 417.25" stroke-width="1.3"/>
<path d="M542.75 409.90 L542.90 425.10" stroke-width="1.3"/>
<path d="M542.90 425.10 L556.00 425.70" stroke-width="1.3"/>
<path d="M530.00 449.50 L530.00 395.50 L533.00 392.40 L566.25 392.40 L569.40 396.00 L568.75 398.00" stroke-width="1.3"/>
<path d="M516.60 400.50 L536.50 400.50" stroke-width="1.4"/>
<path d="M516.60 400.50 L516.60 413.90" stroke-width="1.4"/>
<path d="M548.00 398.00 L548.00 408.00 L553.75 414.90 L601.40 414.90 L606.40 410.00 L613.25 410.00" stroke-width="1.3"/>
<path d="M578.75 414.90 L583.00 410.50 L583.00 404.00" stroke-width="1.3"/>
<path d="M581.90 403.90 L612.60 403.90 L619.50 397.00 L619.50 308.25 L600.75 289.50" stroke-width="1.3"/>
<path d="M542.90 425.10 L536.00 432.00 L536.50 434.50" stroke-width="1.4"/>
<path d="M542.90 425.10 L547.50 420.50 L601.90 420.50 L605.10 423.50 L613.25 423.50" stroke-width="1.4"/>
<path d="M542.50 445.75 L542.50 448.00 L544.50 449.50 L551.00 449.50 L552.00 448.00 L552.00 428.90 L555.60 426.00 L600.00 426.00 L605.10 430.10 L613.25 430.10" stroke-width="1.4"/>
<path d="M568.75 434.50 L571.90 430.50 L598.10 430.50 L604.50 436.40 L613.25 436.40" stroke-width="1.4"/>
<path d="M516.60 442.80 L593.10 441.80" stroke-width="0.55"/>
<path d="M593.10 441.60 L615.10 441.60 L618.25 438.50" stroke-width="1.4"/>
<path d="M555.60 445.75 L555.60 451.40 L546.25 460.10 L536.60 460.10" stroke-width="1.4"/>
<path d="M562.25 445.75 L562.25 457.00" stroke-width="1.4"/>
<path d="M575.60 445.75 L575.60 447.00 L578.75 450.75 L598.90 450.75 L605.10 444.50 L624.00 444.50" stroke-width="1.4"/>
<path d="M576.00 461.00 L598.00 461.00" stroke-width="1.4"/>
<path d="M615.10 461.00 L625.75 461.00" stroke-width="1.4"/>
<path d="M516.60 430.50 L516.60 443.00 L523.75 449.50 L523.75 457.00" stroke-width="1.4"/>
<path d="M530.00 449.50 L533.75 453.25 L533.75 457.00" stroke-width="1.3"/>
<path d="M520.90 417.00 L586.00 417.00" stroke-width="0.55"/>
<path d="M622.60 417.00 L634.10 416.75 L634.10 407.00" stroke-width="1.12"/>
<path d="M655.00 430.10 L636.40 430.10 L629.20 422.90 L629.20 306.70 L612.00 289.50"/>
<path d="M665.00 417.00 L667.00 417.00 L670.50 413.50 L670.50 387.40 L665.10 381.75 L665.10 379.00" stroke-width="1.12"/>
<path d="M632.25 379.00 L632.25 398.00" stroke-width="1.12"/>
<path d="M638.90 379.00 L638.90 398.00" stroke-width="1.12"/>
<path d="M645.40 379.00 L645.40 398.00" stroke-width="1.12"/>
<path d="M652.25 379.00 L652.25 398.00" stroke-width="1.12"/>
<path d="M658.60 379.00 L658.60 408.40" stroke-width="1.12"/>
<path d="M625.75 461.10 L625.75 306.35 L608.90 289.50"/>
<path d="M622.60 400.00 L622.60 307.60 L604.50 289.50"/>
<path d="M631.60 400.00 L631.60 306.00 L615.10 289.50"/>
<path d="M582.50 289.00 L582.50 434.50"/>
<path d="M586.25 285.00 L586.25 419.50"/>
<path d="M589.75 289.00 L589.75 440.75"/>
<path d="M593.10 288.00 L593.10 335.00 L596.50 338.60"/>
<path d="M586.00 285.40 L586.00 292.00"/>
<path d="M593.20 285.40 L593.20 292.00"/>
<path d="M600.60 285.40 L600.60 292.00"/>
<path d="M608.00 285.40 L608.00 292.00"/>
<path d="M615.20 285.40 L615.20 292.00"/>
<path d="M586.00 278.20 L589.70 282.00 L589.70 289.50"/>
<path d="M593.20 278.20 L596.90 282.00 L596.90 289.50"/>
<path d="M600.60 278.20 L604.30 282.00 L604.30 289.50"/>
<path d="M608.00 278.20 L611.70 282.00 L611.70 289.50"/>
<path d="M615.20 278.20 L618.90 282.00 L618.90 289.50"/>
<path d="M618.90 289.50 L619.50 308.00"/>
<path d="M597.20 259.00 L594.50 262.00"/>
<path d="M604.40 259.50 L606.80 262.20"/>
<path d="M611.60 248.80 L611.60 259.50 L614.00 262.20"/>
<path d="M586.00 278.20 L584.30 278.20 L578.75 283.50"/>
<path d="M586.00 285.40 L582.50 289.00"/>
<path d="M615.20 270.80 L619.00 276.00 L619.00 289.50"/>
</g>
<g fill="#ff0000">
<rect x="488.00" y="142.00" width="21.00" height="20.90"/>
<rect x="488.00" y="194.00" width="21.00" height="22.00"/>
<rect x="531.25" y="122.25" width="6.65" height="8.25"/>
<rect x="540.90" y="122.25" width="7.20" height="8.25"/>
<rect x="635.40" y="122.25" width="7.20" height="8.25"/>
<rect x="645.40" y="122.25" width="6.85" height="8.25"/>
<rect x="531.25" y="174.50" width="6.75" height="8.40"/>
<rect x="541.00" y="174.50" width="7.00" height="8.40"/>
<rect x="583.75" y="174.50" width="6.50" height="8.40"/>
<rect x="593.10" y="174.50" width="6.90" height="8.40"/>
<rect x="635.40" y="174.50" width="7.20" height="8.40"/>
<rect x="645.40" y="174.50" width="6.85" height="8.40"/>
<rect x="531.10" y="226.90" width="6.80" height="8.30"/>
<rect x="541.00" y="226.90" width="7.10" height="8.30"/>
<rect x="635.40" y="226.90" width="7.20" height="8.30"/>
<rect x="645.40" y="226.90" width="6.85" height="8.30"/>
<rect x="503.00" y="170.40" width="7.60" height="6.85"/>
<rect x="503.00" y="180.40" width="7.60" height="6.85"/>
<rect x="503.00" y="222.75" width="7.60" height="6.65"/>
<rect x="503.00" y="232.10" width="7.60" height="7.30"/>
<rect x="531.25" y="265.25" width="10.35" height="9.75"/>
<rect x="504.75" y="280.40" width="4.25" height="7.35"/>
<rect x="514.40" y="280.40" width="4.70" height="7.35"/>
<rect x="509.40" y="291.50" width="4.60" height="7.50"/>
<rect x="531.00" y="304.60" width="11.50" height="9.40"/>
<rect x="596.40" y="304.60" width="10.60" height="9.40"/>
<rect x="505.00" y="346.50" width="7.50" height="7.10"/>
<rect x="505.00" y="356.75" width="7.50" height="6.25"/>
<rect x="521.00" y="346.50" width="7.75" height="7.10"/>
<rect x="521.00" y="356.75" width="7.75" height="6.25"/>
<rect x="536.90" y="344.40" width="8.70" height="5.85"/>
<rect x="536.90" y="359.25" width="8.70" height="6.00"/>
<rect x="605.50" y="346.25" width="8.00" height="7.35"/>
<rect x="605.50" y="356.75" width="8.00" height="6.25"/>
<rect x="563.10" y="333.10" width="2.40" height="11.80"/>
<rect x="563.10" y="365.50" width="2.40" height="11.00"/>
<rect x="569.10" y="333.10" width="2.80" height="11.80"/>
<rect x="569.10" y="365.50" width="2.80" height="11.00"/>
<rect x="575.60" y="333.10" width="2.80" height="11.80"/>
<rect x="575.60" y="365.50" width="2.80" height="11.00"/>
<rect x="582.25" y="333.10" width="2.50" height="11.80"/>
<rect x="582.25" y="365.50" width="2.50" height="11.00"/>
<rect x="624.45" y="331.00" width="3.10" height="11.50"/>
<rect x="624.45" y="367.40" width="3.10" height="11.60"/>
<rect x="630.70" y="331.00" width="3.10" height="11.50"/>
<rect x="630.70" y="367.40" width="3.10" height="11.60"/>
<rect x="637.35" y="331.00" width="3.10" height="11.50"/>
<rect x="637.35" y="367.40" width="3.10" height="11.60"/>
<rect x="643.85" y="331.00" width="3.10" height="11.50"/>
<rect x="643.85" y="367.40" width="3.10" height="11.60"/>
<rect x="650.70" y="331.00" width="3.10" height="11.50"/>
<rect x="650.70" y="367.40" width="3.10" height="11.60"/>
<rect x="657.05" y="331.00" width="3.10" height="11.50"/>
<rect x="657.05" y="367.40" width="3.10" height="11.60"/>
<rect x="663.55" y="331.00" width="3.10" height="11.50"/>
<rect x="663.55" y="367.40" width="3.10" height="11.60"/>
<rect x="535.10" y="398.00" width="2.80" height="11.90"/>
<rect x="535.10" y="434.50" width="2.80" height="11.25"/>
<rect x="541.35" y="398.00" width="2.80" height="11.90"/>
<rect x="541.35" y="434.50" width="2.80" height="11.25"/>
<rect x="547.60" y="398.00" width="2.80" height="11.90"/>
<rect x="547.60" y="434.50" width="2.80" height="11.25"/>
<rect x="554.20" y="398.00" width="2.80" height="11.90"/>
<rect x="554.20" y="434.50" width="2.80" height="11.25"/>
<rect x="560.85" y="398.00" width="2.80" height="11.90"/>
<rect x="560.85" y="434.50" width="2.80" height="11.25"/>
<rect x="567.35" y="398.00" width="2.80" height="11.90"/>
<rect x="567.35" y="434.50" width="2.80" height="11.25"/>
<rect x="574.20" y="398.00" width="2.80" height="11.90"/>
<rect x="574.20" y="434.50" width="2.80" height="11.25"/>
<rect x="580.50" y="398.00" width="2.80" height="11.90"/>
<rect x="580.50" y="434.50" width="2.80" height="11.25"/>
<rect x="624.10" y="398.00" width="3.80" height="9.40"/>
<rect x="624.10" y="440.10" width="3.80" height="8.80"/>
<rect x="630.35" y="398.00" width="3.80" height="9.40"/>
<rect x="630.35" y="440.10" width="3.80" height="8.80"/>
<rect x="637.00" y="398.00" width="3.80" height="9.40"/>
<rect x="637.00" y="440.10" width="3.80" height="8.80"/>
<rect x="643.50" y="398.00" width="3.80" height="9.40"/>
<rect x="643.50" y="440.10" width="3.80" height="8.80"/>
<rect x="650.35" y="398.00" width="3.80" height="9.40"/>
<rect x="650.35" y="440.10" width="3.80" height="8.80"/>
<rect x="613.25" y="408.40" width="9.35" height="4.00"/>
<rect x="655.10" y="408.40" width="9.80" height="4.00"/>
<rect x="613.25" y="415.10" width="9.35" height="4.00"/>
<rect x="655.10" y="415.10" width="9.80" height="4.00"/>
<rect x="613.25" y="421.75" width="9.35" height="4.00"/>
<rect x="655.10" y="421.75" width="9.80" height="4.00"/>
<rect x="613.25" y="428.25" width="9.35" height="4.00"/>
<rect x="655.10" y="428.25" width="9.80" height="4.00"/>
<rect x="613.25" y="434.50" width="9.35" height="4.00"/>
<rect x="655.10" y="434.50" width="9.80" height="4.00"/>
<rect x="512.75" y="413.90" width="8.15" height="6.20"/>
<rect x="512.75" y="423.25" width="8.15" height="7.25"/>
<rect x="520.00" y="457.00" width="6.90" height="7.90"/>
<rect x="529.75" y="457.00" width="6.85" height="7.90"/>
<rect x="559.10" y="457.00" width="6.90" height="7.90"/>
<rect x="568.75" y="457.00" width="7.25" height="7.90"/>
<rect x="598.00" y="457.00" width="7.10" height="7.90"/>
<rect x="608.00" y="457.00" width="7.10" height="7.90"/>
<rect x="596.60" y="264.50" width="10.40" height="10.10"/>
<circle cx="520" cy="126.4" r="2.8"/><circle cx="520" cy="152.6" r="2.8"/><circle cx="520" cy="178.75" r="2.8"/><circle cx="520" cy="231" r="2.8"/><circle cx="512" cy="267" r="2.8"/><circle cx="536.25" cy="335.25" r="2.8"/><circle cx="596.5" cy="338.6" r="2.8"/><circle cx="550.6" cy="374.5" r="2.8"/><circle cx="516.6" cy="400.5" r="2.8"/><circle cx="594.75" cy="403.9" r="2.8"/><circle cx="542.9" cy="425.1" r="2.8"/><circle cx="593.1" cy="441.6" r="2.8"/><circle cx="643.9" cy="430.1" r="2.8"/><circle cx="625.75" cy="461.1" r="2.8"/><circle cx="663.5" cy="126.4" r="2.8"/><circle cx="663.5" cy="178.75" r="2.8"/><circle cx="663.5" cy="231" r="2.8"/>
<circle cx="520" cy="192.5" r="2.7"/><circle cx="520" cy="204" r="2.7"/><circle cx="532.9" cy="289.6" r="2.7"/><circle cx="550.9" cy="335.25" r="2.7"/><circle cx="508.5" cy="376.5" r="2.7"/><circle cx="596.5" cy="371.4" r="2.7"/><circle cx="536" cy="417.25" r="2.7"/><circle cx="516.6" cy="443" r="2.7"/><circle cx="586.6" cy="461" r="2.7"/><circle cx="634.1" cy="416.75" r="2.7"/>
<circle cx="586" cy="256.1" r="2.05"/><circle cx="586" cy="263.4" r="2.05"/><circle cx="586" cy="270.8" r="2.05"/><circle cx="586" cy="278.2" r="2.05"/><circle cx="586" cy="285.4" r="2.05"/><circle cx="593.2" cy="256.1" r="2.05"/><circle cx="593.2" cy="263.4" r="2.05"/><circle cx="593.2" cy="270.8" r="2.05"/><circle cx="593.2" cy="278.2" r="2.05"/><circle cx="593.2" cy="285.4" r="2.05"/><circle cx="600.6" cy="256.1" r="2.05"/><circle cx="600.6" cy="263.4" r="2.05"/><circle cx="600.6" cy="278.2" r="2.05"/><circle cx="600.6" cy="285.4" r="2.05"/><circle cx="608" cy="256.1" r="2.05"/><circle cx="608" cy="263.4" r="2.05"/><circle cx="608" cy="278.2" r="2.05"/><circle cx="608" cy="285.4" r="2.05"/><circle cx="615.2" cy="256.1" r="2.05"/><circle cx="615.2" cy="263.4" r="2.05"/><circle cx="615.2" cy="270.8" r="2.05"/><circle cx="615.2" cy="278.2" r="2.05"/><circle cx="615.2" cy="285.4" r="2.05"/>
</g>
<g fill="none" stroke="#ff0000" stroke-width="0.9" stroke-linejoin="round">
<path d="M562.4 148.4 L576.8 148.4 L589.9 161.9 L589.9 151.5 A3.35 3.35 0 0 1 596.6 151.5 L596.6 175 M589.9 175 L589.9 165.5 L577.7 177.6 L570 177.6 L570 168.2 L565.5 168.2 A3.15 3.15 0 0 1 565.5 161.9 L570 161.9 L570 154.7 L562.4 154.7 A3.15 3.15 0 0 1 562.4 148.4"/>
<path d="M576.6 155.1 L585 162.8 L576.6 171.8 Z"/>
<path d="M596.6 158.5 A10.1 10.1 0 0 1 606.7 148.4 L613.7 148.4 A2.3 2.3 0 0 1 616 150.7 L616 170.9 L622.3 170.9 L622.3 151.5 A3.15 3.15 0 0 1 628.6 151.5 L628.6 175.8 A2.2 2.2 0 0 1 626.4 178 L613.7 178 A2.2 2.2 0 0 1 611.5 175.8 L611.5 168.6 L606.7 168.6 A10.1 10.1 0 0 1 596.6 158.5"/>
<path d="M611.3 152.4 L606.6 152.4 A6.3 6.3 0 0 0 606.6 165 L611.3 165 Z"/>
</g>
<g fill="#ff0000" font-family="Liberation Sans, sans-serif" font-size="11.6">
<text x="567.6" y="122.1" textLength="47" lengthAdjust="spacing">4–Layer</text>
<text x="570.6" y="132.6" textLength="39.5" lengthAdjust="spacing">Sample</text>
</g>
<g>
<rect x="635.4" y="459.25" width="46.35" height="13.65" fill="#343434" stroke="#ff0000" stroke-width="0.8"/>
<path d="M646.9 459.25 V472.9 M658.4 459.25 V472.9 M670 459.25 V472.9" stroke="#ff0000" stroke-width="0.8"/>
<path d="M638.3 462.2 H644.3 M641.3 462.2 V470.3" stroke="#ff0000" stroke-width="1.1" fill="none"/>
<path d="M649.3 466.3 H656.3 M652.8 462.6 V470" stroke="#30e030" stroke-width="0.9" fill="none"/>
<path d="M664.3 462 V465 M660.8 465.2 H667.8 M661.8 467 H666.8 M662.8 468.8 H665.8" stroke="#b8a800" stroke-width="0.9" fill="none"/>
<path d="M672.7 462.3 H676.3 A2 2 0 0 1 676.3 466.2 H672.7 M676.3 466.2 A2.05 2.05 0 0 1 676.3 470.3 H672.7 V462.3" stroke="#ff0000" stroke-width="1" fill="none"/>
</g>
<rect x="525.6" y="464.9" width="11.6" height="5.8" rx="1" fill="none" stroke="#ff0000" stroke-width="1.1"/>
<path d="M533.8 470.4 V465.6 H531 A1.25 1.25 0 0 0 531 468.1 H533.8 M531.4 468.1 L528.6 470.6" stroke="#ff0000" stroke-width="1.1" fill="none"/>
<path d="M489 142 V162.9 M489 194 V216" stroke="#ff9d00" stroke-width="1.1"/>
</g>
<path d="M535.6 309.4 L506.9 309.4 L498.75 317.4 L498.75 466 L505.6 472.4 L557.5 472.4 L562.5 467 L562.5 462.5" fill="none" stroke="#2f9bee" stroke-width="2.1" stroke-linejoin="round"/>
<path d="M535.6 309.4 L506.9 309.4 L498.75 317.4 L498.75 466 L505.6 472.4 L557.5 472.4 L562.5 467 L562.5 462.5" fill="none" stroke="#9a58b0" stroke-width="0.75" stroke-linejoin="round"/>
<path d="M508 472.1 H526" stroke="#e0522e" stroke-width="0.9"/>
<path d="M560.4 465.8 L562.5 461.3 L564.6 465.8" fill="none" stroke="#2f9bee" stroke-width="1.1"/>
<rect x="533.40" y="307.20" width="4.4" height="4.4" fill="#1e9cf2"/>
<rect x="504.70" y="307.20" width="4.4" height="4.4" fill="#1e9cf2"/>
<rect x="496.55" y="315.20" width="4.4" height="4.4" fill="#1e9cf2"/>
<rect x="496.55" y="463.80" width="4.4" height="4.4" fill="#1e9cf2"/>
<rect x="503.40" y="470.20" width="4.4" height="4.4" fill="#1e9cf2"/>
<rect x="555.30" y="470.20" width="4.4" height="4.4" fill="#1e9cf2"/>
<path d="M514.5 461.2 V498" stroke="#ababab" stroke-width="0.9"/>
</svg>
<!-- vertical toolbar -->
<div id="vtb">
<div class="a" style="left:168.3px;top:94.4px;width:17.4px;height:16.6px;background:#c6d9ea"></div>
<div class="a" style="left:168.3px;top:201.7px;width:17.4px;height:17.1px;background:#c6d9ea"></div>
<div class="a" style="left:168.3px;top:242.3px;width:17.4px;height:17.1px;background:#c6d9ea"></div>
<svg class="a" style="left:166px;top:92px" width="20" height="190" viewBox="166 92 20 190" fill="none" stroke="#555" stroke-width="0.9">
<path d="M177 97.3 V108 M171.6 102.6 H182.4" stroke="#333" stroke-width="1"/>
<path d="M174 124 V119 A0.9 0.9 0 0 1 175.8 119 V122.5 L179.5 123.3 A1.2 1.2 0 0 1 180.4 124.8 L179.6 128.3 H175.3 L172.6 124.6 A0.8 0.8 0 0 1 174 124" stroke="#777" stroke-width="0.7"/>
<circle cx="175.6" cy="141.8" r="3.6" stroke="#444" stroke-width="1"/><path d="M178.2 144.6 L181.3 147.8" stroke="#333" stroke-width="1.5"/><path d="M180.5 138.5 V139.5 M180.8 141.5 V142.5" stroke="#444"/>
<path d="M171.3 160 V157.3 H174 M180 157.3 H182.7 V160 M182.7 167 V169.7 H180 M174 169.7 H171.3 V167" stroke="#444" stroke-width="0.8"/>
<path d="M177 157.5 V162 M175.3 159.3 L177 157.3 L178.7 159.3 M177 169.5 V165 M175.3 167.7 L177 169.7 L178.7 167.7 M171.5 163.5 H175.5 M173.2 161.8 L171.3 163.5 L173.2 165.2 M182.5 163.5 H178.5 M180.8 161.8 L182.7 163.5 L180.8 165.2" stroke="#2878d0" stroke-width="1"/>
<path d="M175.5 188.5 C177.5 186.5 181.8 184.5 181.8 181.5 C181.8 178.5 172 178 172 182 C172 185 177 185 178.5 183.5" stroke="#555" stroke-width="0.9"/>
<path d="M169.5 196.5 H184.5" stroke="#c8c8c8" stroke-width="0.8"/>
<path d="M174.6 204.3 V216 M179.4 204.3 V216 M171.2 207.8 H182.8 M171.2 212.6 H182.8" stroke="#666" stroke-width="0.85"/>
<path d="M174.6 225.5 V236.5 M179.4 225.5 V236.5 M171.5 228.8 H182.5 M171.5 233.4 H182.5" stroke="#808080" stroke-width="0.8"/><rect x="173.6" y="227.7" width="2" height="2" fill="#2a78d0" stroke="none"/>
<rect x="172.5" y="247.5" width="9.2" height="8" rx="0.8" stroke="#555" stroke-width="0.95"/><rect x="171.6" y="246.3" width="2" height="2" fill="#2a78d0" stroke="none"/>
<path d="M171.3 275.6 H181.6" stroke="#888" stroke-width="0.9"/><path d="M172.3 274.8 L179.3 266.6" stroke="#3a78c8" stroke-width="1"/><path d="M176.3 275.3 A3.5 3.5 0 0 0 175.3 272.6" stroke="#555" stroke-width="0.7"/>
</svg>
</div>
<!-- status -->
<div id="status">
</div>
<!-- nav bar -->
<div class="a" style="left:166px;top:513.1px;width:853px;height:16.9px;background:#b1b1b1"></div>
<div class="a" style="left:175.2px;top:515.6px;width:50.8px;height:11.2px;background:#f6f6f6;border:1px solid #c8c8c8"></div>
<div class="a" style="left:962.9px;top:515.6px;width:48px;height:11.2px;background:#f6f6f6;border:1px solid #c8c8c8"></div>
<svg class="a" style="left:166px;top:513px" width="852" height="17" viewBox="166 513 852 17" fill="none"><path d="M183.6 518 L180.2 521.2 L183.6 524.4" stroke="#505050" stroke-width="1.5"/><path d="M1002.6 518 L1006 521.2 L1002.6 524.4" stroke="#505050" stroke-width="1.5"/></svg>
<!-- tooltip -->
<div class="a" style="left:520px;top:478.3px;width:68.2px;height:36.8px;background:#fff;border:0.6px solid #e2e2e2"></div>
<div class="a" style="left:556.3px;top:505px;width:8.2px;height:8.2px;border-radius:50%;background:#ffff00;border:0.7px solid #6a96c8"></div>

<!-- meldungen -->
<div class="a hdr" style="left:166px;top:532.4px;width:853.6px;height:17.4px;border:1px solid #d6d6d6;border-bottom:none"></div>
<svg class="a" style="left:155px;top:52px" width="6" height="7" viewBox="0 0 6 7"><path d="M1.8 0.8 H4.2 V3.6 H1.8 Z M0.8 3.8 H5.2 M3 3.8 V6.3" stroke="#666" stroke-width="0.7" fill="none"/></svg><svg class="a" style="left:155px;top:458.5px" width="6" height="7" viewBox="0 0 6 7"><path d="M1.8 0.8 H4.2 V3.6 H1.8 Z M0.8 3.8 H5.2 M3 3.8 V6.3" stroke="#666" stroke-width="0.7" fill="none"/></svg><svg class="a" style="left:1008.5px;top:535.5px" width="6" height="7" viewBox="0 0 6 7"><path d="M1.8 0.8 H4.2 V3.6 H1.8 Z M0.8 3.8 H5.2 M3 3.8 V6.3" stroke="#666" stroke-width="0.7" fill="none"/></svg>
<!-- messages lower -->
<div class="a" style="left:229px;top:544.4px;width:39px;height:4.8px;border:1px solid #c4c4c4;border-top:none;background:#fff"></div>
<div class="a" style="left:222.5px;top:545.6px;width:2.2px;height:1px;background:#444"></div>
<div class="a" style="left:255px;top:545.6px;width:2.2px;height:1px;background:#444"></div>
<svg class="a" style="left:0;top:0;text-rendering:geometricPrecision" width="1024" height="555" font-family="Liberation Sans, sans-serif"><text x="407" y="10" font-size="7.9" textLength="209" lengthAdjust="spacingAndGlyphs" fill="#444">Unbenannt[S4_SingleSided_Top] - LPKF CircuitPro PL 3.3</text>
<text x="11.9" y="24" font-size="6.9" textLength="14.1" lengthAdjust="spacingAndGlyphs" fill="#333">Datei</text>
<text x="35.25" y="24" font-size="6.9" textLength="29.75" lengthAdjust="spacingAndGlyphs" fill="#333">Bearbeiten</text>
<text x="74" y="24" font-size="6.9" textLength="25" lengthAdjust="spacingAndGlyphs" fill="#333">Einfügen</text>
<text x="108.5" y="24" font-size="6.9" textLength="18.75" lengthAdjust="spacingAndGlyphs" fill="#333">Layout</text>
<text x="136.5" y="24" font-size="6.9" textLength="49" lengthAdjust="spacingAndGlyphs" fill="#333">Werkzeugbahnen</text>
<text x="194.9" y="24" font-size="6.9" textLength="31" lengthAdjust="spacingAndGlyphs" fill="#333">Produktion</text>
<text x="235.25" y="24" font-size="6.9" textLength="19" lengthAdjust="spacingAndGlyphs" fill="#333">Service</text>
<text x="7.1" y="58" font-size="6.4" textLength="68" lengthAdjust="spacingAndGlyphs" fill="#333">Workflow-Einstellungen</text>
<text x="16.25" y="72" font-size="8.1" textLength="107.5" lengthAdjust="spacingAndGlyphs" font-weight="bold" fill="#111">Materialzusammensetzung</text>
<text x="16.25" y="85" font-size="8.1" textLength="26.9" lengthAdjust="spacingAndGlyphs" font-weight="bold" fill="#111">Layout</text>
<text x="16.25" y="146" font-size="8.1" textLength="42" lengthAdjust="spacingAndGlyphs" font-weight="bold" fill="#111">Scanfelder</text>
<text x="16.25" y="158" font-size="8.1" textLength="44.8" lengthAdjust="spacingAndGlyphs" font-weight="bold" fill="#111">Werkzeuge</text>
<text x="16.25" y="170" font-size="8.1" textLength="39.1" lengthAdjust="spacingAndGlyphs" font-weight="bold" fill="#111">Workflow</text>
<text x="16.25" y="183" font-size="8.1" textLength="70.2" lengthAdjust="spacingAndGlyphs" font-weight="bold" fill="#111">Werkzeugbahnen</text>
<text x="16.25" y="195" font-size="8.1" textLength="44.8" lengthAdjust="spacingAndGlyphs" font-weight="bold" fill="#111">Produktion</text>
<text x="26" y="96" font-size="6.1" textLength="14.6" lengthAdjust="spacingAndGlyphs" fill="#111">Layer</text>
<text x="26" y="108" font-size="6.1" textLength="22.75" lengthAdjust="spacingAndGlyphs" fill="#111">Blenden</text>
<text x="26" y="120" font-size="6.1" textLength="26.9" lengthAdjust="spacingAndGlyphs" fill="#111">Instanzen</text>
<text x="26" y="132" font-size="6.1" textLength="39" lengthAdjust="spacingAndGlyphs" fill="#111">Passermarken</text>
<text x="178.75" y="66" font-size="12.4" textLength="23.25" lengthAdjust="spacingAndGlyphs" fill="#2a2a2a">Neu</text>
<text x="221.75" y="66" font-size="12.4" textLength="45.75" lengthAdjust="spacingAndGlyphs" fill="#2a2a2a">Material</text>
<text x="287.5" y="66" font-size="12.4" textLength="66.25" lengthAdjust="spacingAndGlyphs" fill="#2a2a2a">Importieren</text>
<text x="374.5" y="66" font-size="12.4" textLength="37.5" lengthAdjust="spacingAndGlyphs" fill="#2a2a2a">Layout</text>
<text x="431.5" y="66" font-size="12.4" textLength="59.5" lengthAdjust="spacingAndGlyphs" fill="#2a2a2a">Scanfelder</text>
<text x="511" y="66" font-size="12.4" textLength="63.25" lengthAdjust="spacingAndGlyphs" fill="#2a2a2a">Werkzeuge</text>
<text x="594.75" y="66" font-size="12.4" textLength="53.75" lengthAdjust="spacingAndGlyphs" fill="#2a2a2a">Workflow</text>
<text x="669" y="66" font-size="12.4" textLength="100" lengthAdjust="spacingAndGlyphs" fill="#2a2a2a">Werkzeugbahnen</text>
<text x="789.5" y="66" font-size="12.4" textLength="61.9" lengthAdjust="spacingAndGlyphs" fill="#2a2a2a">Produktion</text>
<text x="964" y="66" font-size="12.4" textLength="42" lengthAdjust="spacingAndGlyphs" fill="#2a2a2a">Kamera</text>
<text x="211.9" y="85" font-size="6.4" textLength="30.6" lengthAdjust="spacingAndGlyphs" fill="#1a1a1a">Fiducial (0)</text>
<text x="289.5" y="85" font-size="6.4" textLength="13.5" lengthAdjust="spacingAndGlyphs" fill="#1a1a1a">Linie</text>
<text x="185.8" y="508" font-size="6.5" textLength="9.4" lengthAdjust="spacingAndGlyphs" fill="#222">X =</text>
<text x="211" y="508" font-size="6.5" textLength="26.8" lengthAdjust="spacingAndGlyphs" fill="#222">5,005 mm</text>
<text x="246.2" y="508" font-size="6.5" textLength="9.4" lengthAdjust="spacingAndGlyphs" fill="#222">Y =</text>
<text x="270.6" y="508" font-size="6.5" textLength="27.2" lengthAdjust="spacingAndGlyphs" fill="#222">2,074 mm</text>
<text x="334.6" y="508" font-size="6.5" textLength="3.5" lengthAdjust="spacingAndGlyphs" fill="#222">0</text>
<text x="187.7" y="523" font-size="6.6" textLength="33.3" lengthAdjust="spacingAndGlyphs" fill="#333">Importieren</text>
<text x="968.7" y="523" font-size="6.4" textLength="29.1" lengthAdjust="spacingAndGlyphs" fill="#333">Scanfelder</text>
<text x="169.4" y="542" font-size="6.6" textLength="32.8" lengthAdjust="spacingAndGlyphs" fill="#333">Meldungen</text>
<text x="7.5" y="464" font-size="6.5" textLength="30.8" lengthAdjust="spacingAndGlyphs" fill="#333">Navigation</text>
<text x="7.5" y="545" font-size="6.3" textLength="39.5" lengthAdjust="spacingAndGlyphs" fill="#333">Eigenschaften</text>
<text x="53.4" y="545" font-size="6.5" textLength="30.8" lengthAdjust="spacingAndGlyphs" fill="#333">Navigation</text>
<text x="523" y="487" font-size="7" textLength="32" lengthAdjust="spacingAndGlyphs" font-weight="bold" fill="#333">OpenPath</text>
<text x="523" y="500" font-size="6.6" textLength="18" lengthAdjust="spacingAndGlyphs" fill="#444">Layer:</text>
<text x="557.75" y="500" font-size="6.6" textLength="28" lengthAdjust="spacingAndGlyphs" fill="#444">TopLayer</text>
<text x="523" y="512" font-size="6.6" textLength="22" lengthAdjust="spacingAndGlyphs" fill="#444">Blende:</text>
<text x="567.1" y="512" font-size="6.6" textLength="12" lengthAdjust="spacingAndGlyphs" fill="#444">D73</text></svg>
</body></html>
